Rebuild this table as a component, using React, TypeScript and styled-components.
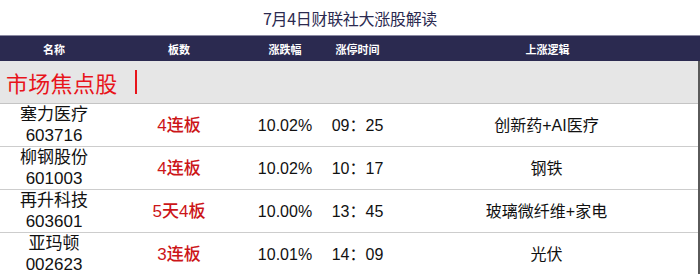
import React from "react";
import styled, { createGlobalStyle } from "styled-components";

const GlobalStyle = createGlobalStyle`
  html, body {
    margin: 0;
    padding: 0;
    background: #ffffff;
  }
  body {
    font-family: "Liberation Sans", "Noto Sans CJK SC", sans-serif;
  }
`;

const COLUMNS = "108px 142px 70px 75px 1fr";

const Page = styled.div`
  width: 700px;
  height: 274px;
  overflow: hidden;
  background: #ffffff;
`;

const Title = styled.h1`
  margin: 0;
  height: 35px;
  display: flex;
  align-items: center;
  justify-content: center;
  font-family: "Noto Sans CJK SC", serif;
  font-size: 16px;
  font-weight: 400;
  color: #2b2a50;
  letter-spacing: -0.3px;
`;

const HeaderRow = styled.div`
  display: grid;
  grid-template-columns: ${COLUMNS};
  height: 25px;
  background: #2b2a50;
  border-top: 1px solid #8b8aa3;
  align-items: center;
`;

const HeaderCell = styled.div`
  text-align: center;
  color: #ffffff;
  font-family: "Noto Sans CJK SC", sans-serif;
  font-size: 11px;
  font-weight: 700;
`;

const Body = styled.div`
  border-right: 2px solid #5a5a5a;
`;

const Section = styled.div`
  height: 42px;
  background: #e6e6e6;
  border-bottom: 1px solid #c4c4c4;
  display: flex;
  align-items: center;
  padding-left: 6px;
  font-family: "Noto Sans CJK SC", serif;
  font-size: 22px;
  color: #e8141b;
  letter-spacing: 0.3px;
`;

const Bar = styled.span`
  display: inline-block;
  width: 2px;
  height: 24px;
  background: #e8141b;
  margin-left: 17px;
`;

const Row = styled.div`
  display: grid;
  grid-template-columns: ${COLUMNS};
  height: 42px;
  border-bottom: 1px solid #cdcdcd;
  align-items: center;
  background: #ffffff;
`;

const Cell = styled.div<{ $size?: number }>`
  text-align: center;
  font-size: ${(p) => p.$size ?? 17}px;
  color: #111111;
  line-height: 21px;
`;

const Board = styled(Cell)`
  color: #cc1518;
  font-weight: 500;
`;

interface Stock {
  name: string;
  code: string;
  board: string;
  pct: string;
  time: string;
  logic: string;
}

const stocks: Stock[] = [
  { name: "塞力医疗", code: "603716", board: "4连板", pct: "10.02%", time: "09：25", logic: "创新药+AI医疗" },
  { name: "柳钢股份", code: "601003", board: "4连板", pct: "10.02%", time: "10：17", logic: "钢铁" },
  { name: "再升科技", code: "603601", board: "5天4板", pct: "10.00%", time: "13：45", logic: "玻璃微纤维+家电" },
  { name: "亚玛顿", code: "002623", board: "3连板", pct: "10.01%", time: "14：09", logic: "光伏" },
];

export default function App() {
  return (
    <Page>
      <GlobalStyle />
      <Title>7月4日财联社大涨股解读</Title>
      <HeaderRow>
        <HeaderCell>名称</HeaderCell>
        <HeaderCell>板数</HeaderCell>
        <HeaderCell>涨跌幅</HeaderCell>
        <HeaderCell>涨停时间</HeaderCell>
        <HeaderCell>上涨逻辑</HeaderCell>
      </HeaderRow>
      <Body>
        <Section>
          市场焦点股
          <Bar />
        </Section>
        {stocks.map((s) => (
          <Row key={s.code}>
            <Cell>
              {s.name}
              <br />
              {s.code}
            </Cell>
            <Board>{s.board}</Board>
            <Cell $size={16}>{s.pct}</Cell>
            <Cell $size={16}>{s.time}</Cell>
            <Cell $size={16}>{s.logic}</Cell>
          </Row>
        ))}
      </Body>
    </Page>
  );
}
